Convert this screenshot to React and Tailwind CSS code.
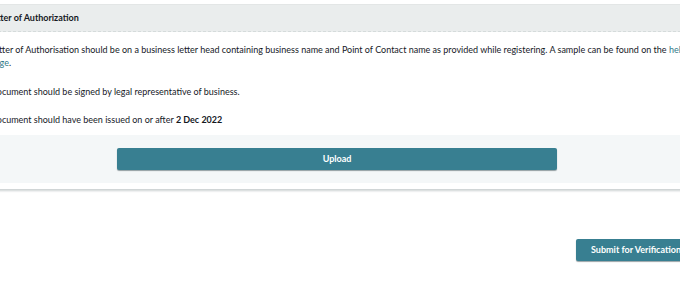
export default function App() {
  return (
    <div className="w-[680px] h-[290px] overflow-hidden bg-white" style={{ fontFamily: '"Lato", "Liberation Sans", sans-serif' }}>
      <div className="ml-[-22px] w-[718px] pt-[4px]">
        <div className="border-t border-[#e3e6e6] shadow-[0_2px_2px_0_rgba(0,28,36,0.2)] pb-[6px] bg-white">
          <div className="bg-[#eaeded] h-[27px] flex items-center pl-[10px] border-b border-dashed border-[#d5dbdb]">
            <span className="text-[9px] font-bold text-[#16191f]">Letter of Authorization</span>
          </div>
          <div className="pl-[12px] pr-0 pt-[11px] text-[9px] text-[#16191f] leading-[13px]">
            <p>
              Letter of Authorisation should be on a business letter head containing business name and Point of Contact name as provided while registering. A sample can be found on the <span className="text-[#2f7888]">help page</span>.
            </p>
            <p className="mt-[16px]">Document should be signed by legal representative of business.</p>
            <p className="mt-[15px]">Document should have been issued on or after <span className="font-bold">2 Dec 2022</span></p>
          </div>
          <div className="mt-[9px] bg-[#f4f7f8] h-[48px] flex items-center justify-center">
            <button className="w-[440px] h-[22px] bg-[#387f91] text-white text-[9px] font-bold rounded-[2px] shadow-[0_1px_1px_0_rgba(0,28,36,0.4)]">Upload</button>
          </div>
        </div>
        <div className="mt-[50px] flex justify-end">
          <button className="w-[120px] h-[22px] bg-[#387f91] text-white text-[9px] font-bold rounded-[2px] shadow-[0_1px_1px_0_rgba(0,28,36,0.4)]">Submit for Verification</button>
        </div>
      </div>
    </div>
  );
}
